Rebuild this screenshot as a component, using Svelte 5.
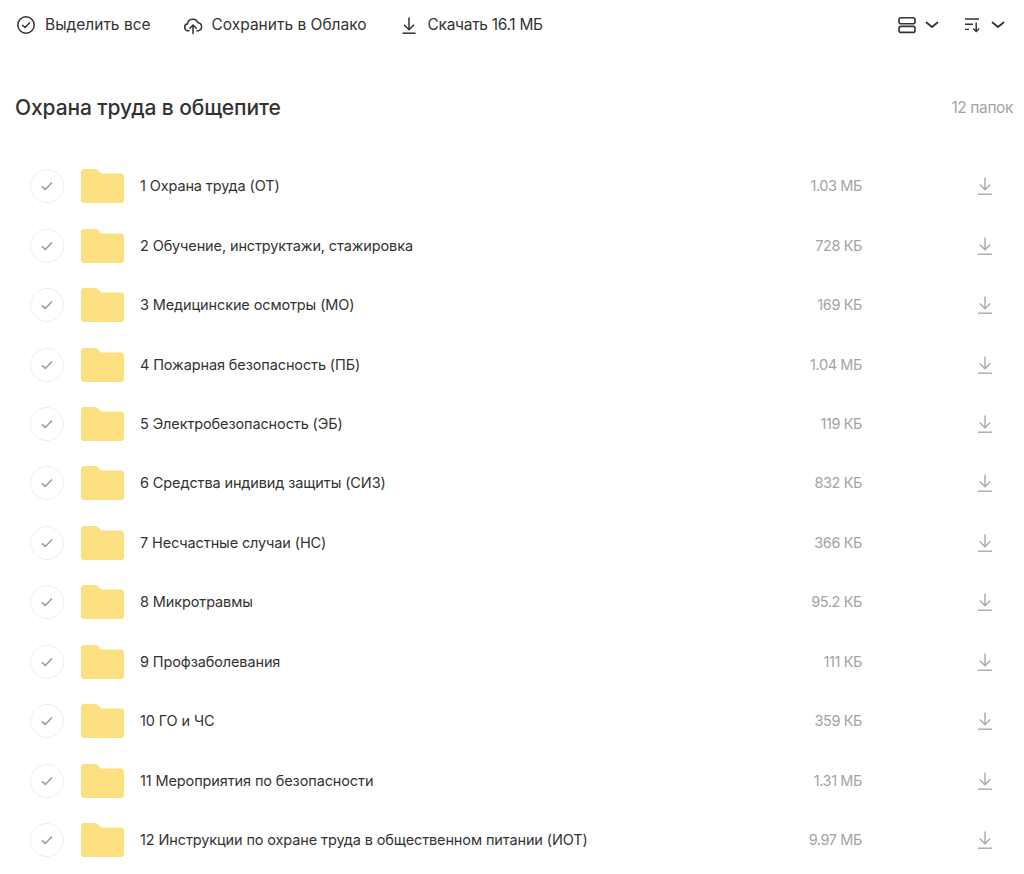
<script>
  const folders = [
    { name: '1 Охрана труда (ОТ)', size: '1.03 МБ' },
    { name: '2 Обучение, инструктажи, стажировка', size: '728 КБ' },
    { name: '3 Медицинские осмотры (МО)', size: '169 КБ' },
    { name: '4 Пожарная безопасность (ПБ)', size: '1.04 МБ' },
    { name: '5 Электробезопасность (ЭБ)', size: '119 КБ' },
    { name: '6 Средства индивид защиты (СИЗ)', size: '832 КБ' },
    { name: '7 Несчастные случаи (НС)', size: '366 КБ' },
    { name: '8 Микротравмы', size: '95.2 КБ' },
    { name: '9 Профзаболевания', size: '111 КБ' },
    { name: '10 ГО и ЧС', size: '359 КБ' },
    { name: '11 Мероприятия по безопасности', size: '1.31 МБ' },
    { name: '12 Инструкции по охране труда в общественном питании (ИОТ)', size: '9.97 МБ' }
  ];
</script>

<div class="page">
  <div class="toolbar">
    <button class="tool">
      <svg width="20" height="20" viewBox="0 0 20 20" fill="none" stroke="#333" stroke-width="1.5">
        <circle cx="10" cy="10" r="8.2" />
        <path d="M6.6 10.2l2.4 2.3 4.4-4.6" stroke-linecap="round" stroke-linejoin="round" />
      </svg>
      <span>Выделить все</span>
    </button>
    <button class="tool">
      <svg width="20" height="20" viewBox="0 0 20 20" fill="none" stroke="#333" stroke-width="1.5" stroke-linecap="round" stroke-linejoin="round">
        <path d="M6 15.8H5a3.6 3.6 0 0 1-.5-7.1 5.4 5.4 0 0 1 10.4-1 4.1 4.1 0 0 1 .4 8.1H14" />
        <path d="M10 18.5v-8M6.8 13.2L10 10l3.2 3.2" />
      </svg>
      <span>Сохранить в Облако</span>
    </button>
    <button class="tool">
      <svg width="20" height="20" viewBox="0 0 20 20" fill="none" stroke="#333" stroke-width="1.5">
        <path d="M10 2.5v12M5 9.8l5 5 5-5" />
        <path d="M3.5 18.2h13" />
      </svg>
      <span class="tight">Скачать 16.1 МБ</span>
    </button>
    <div class="controls">
      <button class="control">
        <svg width="20" height="20" viewBox="0 0 20 20" fill="none" stroke="#333" stroke-width="1.6">
          <rect x="2" y="2.8" width="16" height="6" rx="2" />
          <rect x="2" y="11.4" width="16" height="6" rx="2" />
        </svg>
        <svg width="14" height="8" viewBox="0 0 14 8" fill="none" stroke="#333" stroke-width="1.8">
          <path d="M1.5 1.5L7 6l5.5-4.5" stroke-linecap="round" stroke-linejoin="round" />
        </svg>
      </button>
      <button class="control">
        <svg width="20" height="20" viewBox="0 0 20 20" fill="none" stroke="#333" stroke-width="1.4">
          <path d="M2 4h14M2 9.2h8M2 14.4h4" />
          <path d="M13.2 7.5v9M10.2 13.6l3 3 3-3" />
        </svg>
        <svg width="14" height="8" viewBox="0 0 14 8" fill="none" stroke="#333" stroke-width="1.8">
          <path d="M1.5 1.5L7 6l5.5-4.5" stroke-linecap="round" stroke-linejoin="round" />
        </svg>
      </button>
    </div>
  </div>

  <div class="heading">
    <h1>Охрана труда в общепите</h1>
    <span class="count">12 папок</span>
  </div>

  <ul class="list">
    {#each folders as folder}
      <li class="row">
        <span class="check">
          <svg width="12" height="10" viewBox="0 0 12 10" fill="none" stroke="#9a9a9f" stroke-width="1.5">
            <path d="M1 5.4l3.3 3L11 1.4" />
          </svg>
        </span>
        <svg class="folder" width="43" height="34" viewBox="0 0 43 34">
          <path d="M3 0h11c1.2 0 2.2.4 3 1.2L20 4.500h20c1.700 0 3 1.300 3 3V31c0 1.700-1.300 3-3 3H3c-1.700 0-3-1.300-3-3V3c0-1.700 1.300-3 3-3z" fill="#fbdf80" />
        </svg>
        <span class="name">{folder.name}</span>
        <span class="size">{folder.size}</span>
        <svg class="download" width="18" height="20" viewBox="0 0 18 20" fill="none" stroke="#a9a9ae" stroke-width="1.4">
          <path d="M9 1.5v12M3.8 8.6L9 13.8l5.200-5.200" />
          <path d="M2 18.2h14" />
        </svg>
      </li>
    {/each}
  </ul>
</div>

<style>
  :global(body) {
    background: #fff;
  }

  .page {
    font-family: Inter, "Noto Sans", sans-serif;
    color: #333;
    padding: 0 11px 0 15px;
  }

  button {
    display: flex;
    align-items: center;
    border: 0;
    padding: 0;
    background: none;
    font: inherit;
    color: inherit;
  }

  .toolbar {
    display: flex;
    align-items: center;
    height: 49px;
    gap: 32px;
    padding-left: 1px;
  }

  .tool {
    gap: 9px;
    font-size: 15.5px;
  }

  .tool .tight {
    letter-spacing: -0.3px;
  }

  .controls {
    margin-left: auto;
    display: flex;
    gap: 24px;
    padding-right: 8px;
  }

  .control {
    gap: 8px;
  }

  .heading {
    display: flex;
    justify-content: space-between;
    align-items: center;
    margin-top: 33px;
    height: 50px;
  }

  h1 {
    margin: 0;
    font-size: 21px;
    font-weight: 500;
    letter-spacing: -0.1px;
  }

  .count {
    font-size: 15.5px;
    color: #a3a3a8;
    letter-spacing: -0.4px;
  }

  .list {
    list-style: none;
    margin: 24px 0 0;
    padding: 0 0 0 15px;
  }

  .row {
    display: flex;
    align-items: center;
    height: 59.45px;
    font-size: 14.5px;
  }

  .check {
    display: flex;
    align-items: center;
    justify-content: center;
    width: 34px;
    height: 34px;
    box-sizing: border-box;
    border: 1px solid #eeeef0;
    border-radius: 50%;
    margin-top: 1px;
  }

  .folder {
    margin: 1px 0 0 17px;
  }

  .name {
    flex: 1;
    margin-left: 16px;
    letter-spacing: -0.12px;
  }

  .size {
    color: #a3a3a8;
    letter-spacing: -0.4px;
    margin-right: 114px;
  }

  .download {
    margin: 1px 19px 0 0;
  }
</style>
